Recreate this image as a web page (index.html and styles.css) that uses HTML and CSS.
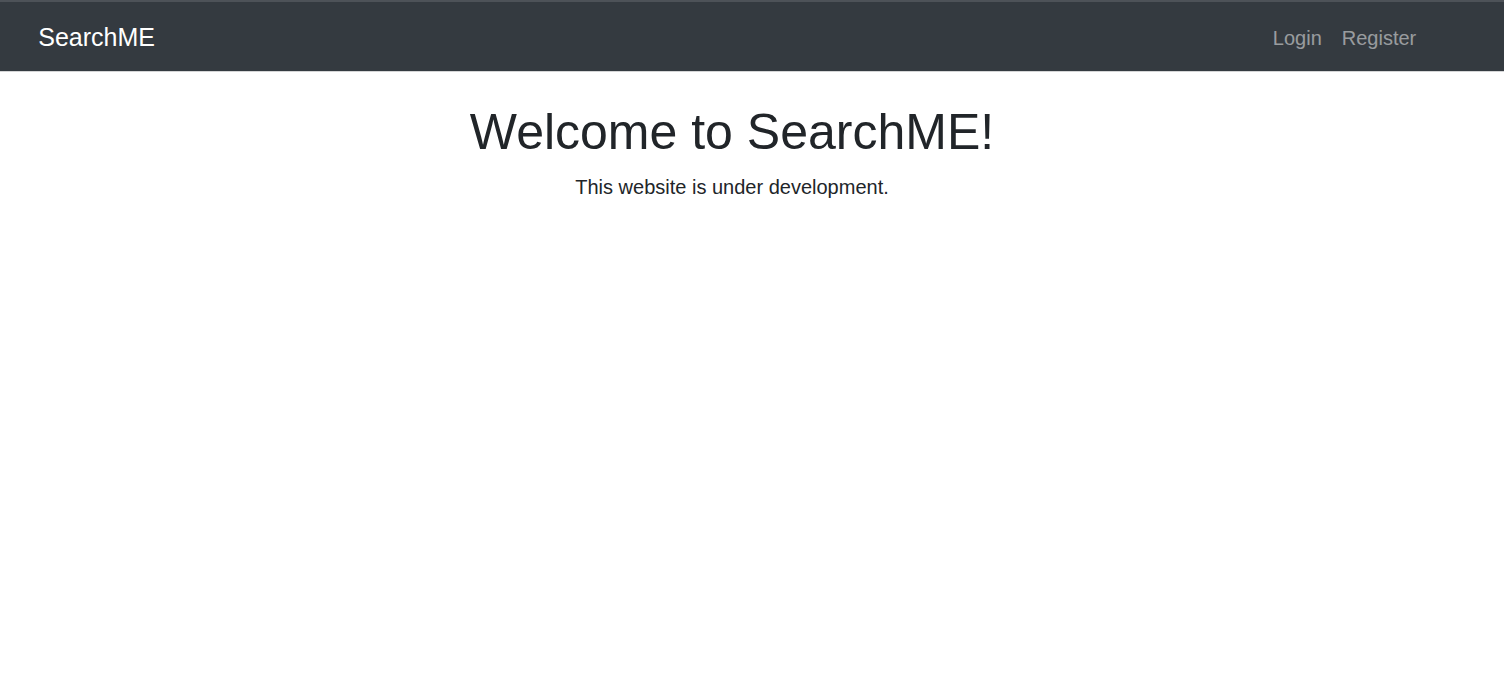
FILE: index.html
```html
<!DOCTYPE html>
<html lang="en">
<head>
<meta charset="utf-8">
<title>SearchME</title>
<link rel="stylesheet" href="styles.css">
</head>
<body>
<nav class="navbar">
  <div class="navbar-inner">
    <a class="brand" href="#">SearchME</a>
    <ul class="nav">
      <li><a class="nav-link" href="#">Login</a></li>
      <li><a class="nav-link" href="#">Register</a></li>
    </ul>
  </div>
</nav>
<main class="main">
  <h1 class="title">Welcome to SearchME!</h1>
  <p class="lead">This website is under development.</p>
</main>
</body>
</html>
```

FILE: styles.css
```css
* { box-sizing: border-box; }
html, body { margin: 0; padding: 0; }
body {
  font-family: "Liberation Sans", Arial, sans-serif;
  font-size: 20px;
  line-height: 1.5;
  color: #212529;
  background: #fff;
}
.navbar {
  background: #343a40;
  border-top: 2px solid #4d5258;
  border-bottom: 1px solid #d4d5d6;
  padding: 11px 20px 8px;
}
.navbar-inner {
  display: flex;
  align-items: center;
  justify-content: space-between;
  padding: 0 18.75px 0 18.25px;
}
.brand {
  font-size: 25px;
  line-height: 37.5px;
  padding: 6.25px 0;
  color: #fff;
  text-decoration: none;
}
.nav {
  display: flex;
  list-style: none;
  margin: 0 39px 0 0;
  padding: 0;
}
.nav-link {
  display: block;
  padding: 10px 10px;
  line-height: 30px;
  color: rgba(255, 255, 255, 0.5);
  text-decoration: none;
}
.main {
  text-align: center;
  padding: 0 40px 0 0;
  margin-top: 30px;
}
.title {
  font-size: 50px;
  font-weight: 400;
  line-height: 1.2;
  margin: 0 0 10px;
}
.lead {
  margin: 0;
  font-size: 20px;
  line-height: 30px;
}
```
